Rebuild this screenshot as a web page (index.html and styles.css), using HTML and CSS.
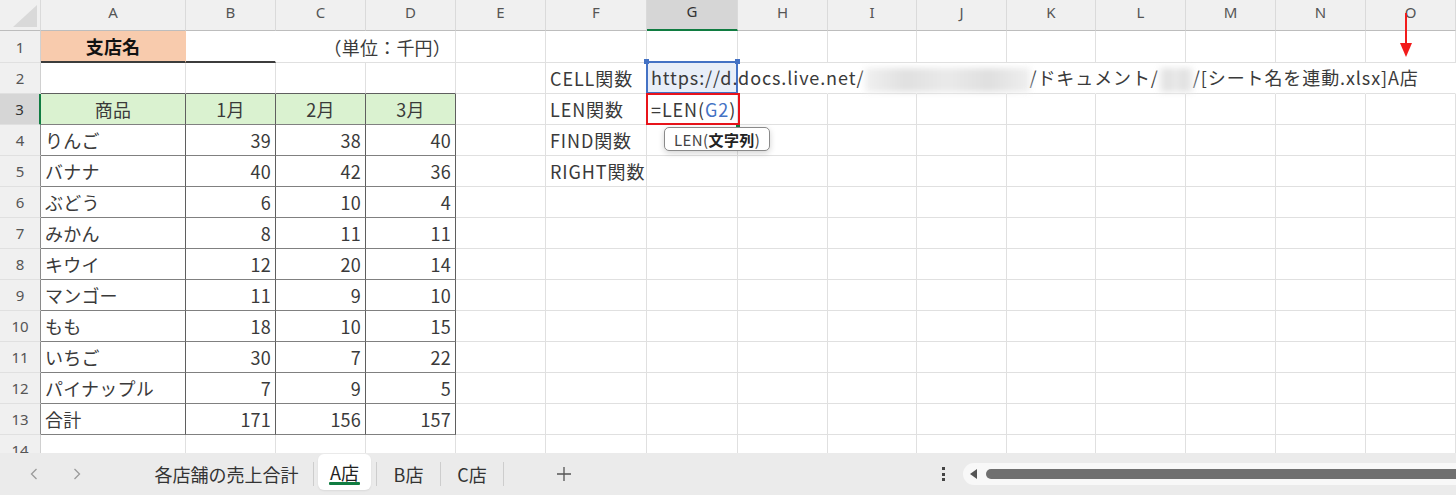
FILE: index.html
```html
<!DOCTYPE html>
<html lang="ja">
<head>
    <meta charset="UTF-8">
    <title>シート名を連動</title>
    <link rel="stylesheet" href="styles.css">
</head>
<body>
<div class="app">
    <div class="sheet">
        <div class="grid">
            <!-- column headers -->
            <div class="corner"><span class="tri"></span></div>
            <div class="h">A</div><div class="h">B</div><div class="h">C</div><div class="h">D</div><div class="h">E</div>
            <div class="h">F</div><div class="h sel">G</div><div class="h">H</div><div class="h">I</div><div class="h">J</div>
            <div class="h">K</div><div class="h">L</div><div class="h">M</div><div class="h">N</div><div class="h">O</div>

            <!-- row 1 -->
            <div class="rh">1</div>
            <div class="c shop">支店名</div>
            <div class="c b1"></div>
            <div class="c unit">（単位：千円）</div>
            <div class="c"></div><div class="c"></div><div class="c"></div><div class="c"></div><div class="c"></div><div class="c"></div>
            <div class="c"></div><div class="c"></div><div class="c"></div><div class="c"></div><div class="c"></div>

            <!-- row 2 -->
            <div class="rh">2</div>
            <div class="c tt"></div><div class="c tt"></div><div class="c tt"></div><div class="c tt"></div>
            <div class="c"></div>
            <div class="c w">CELL関数</div>
            <div class="c ref w"><span class="txt">https://d.docs.live.net/<span class="blur wide"></span>/ドキュメント/<span class="blur narrow"></span>/[シート名を連動.xlsx]A店</span></div>
            <div class="c nr"></div><div class="c nr"></div><div class="c nr"></div><div class="c nr"></div>
            <div class="c nr"></div><div class="c nr"></div><div class="c nr"></div><div class="c nr"></div>

            <!-- row 3 -->
            <div class="rh sel">3</div>
            <div class="c t g ctr">商品</div><div class="c t g ctr">1月</div><div class="c t g ctr">2月</div><div class="c t g ctr">3月</div>
            <div class="c"></div>
            <div class="c w">LEN関数</div>
            <div class="c edit w"><span class="txt">=LEN(<span class="blue">G2</span>)</span>
                <div class="tip">LEN(<b>文字列</b>)</div>
            </div>
            <div class="c"></div><div class="c"></div><div class="c"></div><div class="c"></div>
            <div class="c"></div><div class="c"></div><div class="c"></div><div class="c"></div>

            <!-- row 4 -->
            <div class="rh tb">4</div>
            <div class="c t">りんご</div><div class="c t n">39</div><div class="c t n">38</div><div class="c t n">40</div>
            <div class="c"></div><div class="c w">FIND関数</div>
            <div class="c"></div><div class="c"></div><div class="c"></div><div class="c"></div><div class="c"></div>
            <div class="c"></div><div class="c"></div><div class="c"></div><div class="c"></div>

            <!-- row 5 -->
            <div class="rh tb">5</div>
            <div class="c t">バナナ</div><div class="c t n">40</div><div class="c t n">42</div><div class="c t n">36</div>
            <div class="c"></div><div class="c w">RIGHT関数</div>
            <div class="c"></div><div class="c"></div><div class="c"></div><div class="c"></div><div class="c"></div>
            <div class="c"></div><div class="c"></div><div class="c"></div><div class="c"></div>

            <!-- row 6 -->
            <div class="rh tb">6</div>
            <div class="c t">ぶどう</div><div class="c t n">6</div><div class="c t n">10</div><div class="c t n">4</div>
            <div class="c"></div><div class="c"></div>
            <div class="c"></div><div class="c"></div><div class="c"></div><div class="c"></div><div class="c"></div>
            <div class="c"></div><div class="c"></div><div class="c"></div><div class="c"></div>

            <!-- row 7 -->
            <div class="rh tb">7</div>
            <div class="c t">みかん</div><div class="c t n">8</div><div class="c t n">11</div><div class="c t n">11</div>
            <div class="c"></div><div class="c"></div>
            <div class="c"></div><div class="c"></div><div class="c"></div><div class="c"></div><div class="c"></div>
            <div class="c"></div><div class="c"></div><div class="c"></div><div class="c"></div>

            <!-- row 8 -->
            <div class="rh tb">8</div>
            <div class="c t">キウイ</div><div class="c t n">12</div><div class="c t n">20</div><div class="c t n">14</div>
            <div class="c"></div><div class="c"></div>
            <div class="c"></div><div class="c"></div><div class="c"></div><div class="c"></div><div class="c"></div>
            <div class="c"></div><div class="c"></div><div class="c"></div><div class="c"></div>

            <!-- row 9 -->
            <div class="rh tb">9</div>
            <div class="c t">マンゴー</div><div class="c t n">11</div><div class="c t n">9</div><div class="c t n">10</div>
            <div class="c"></div><div class="c"></div>
            <div class="c"></div><div class="c"></div><div class="c"></div><div class="c"></div><div class="c"></div>
            <div class="c"></div><div class="c"></div><div class="c"></div><div class="c"></div>

            <!-- row 10 -->
            <div class="rh tb">10</div>
            <div class="c t">もも</div><div class="c t n">18</div><div class="c t n">10</div><div class="c t n">15</div>
            <div class="c"></div><div class="c"></div>
            <div class="c"></div><div class="c"></div><div class="c"></div><div class="c"></div><div class="c"></div>
            <div class="c"></div><div class="c"></div><div class="c"></div><div class="c"></div>

            <!-- row 11 -->
            <div class="rh tb">11</div>
            <div class="c t">いちご</div><div class="c t n">30</div><div class="c t n">7</div><div class="c t n">22</div>
            <div class="c"></div><div class="c"></div>
            <div class="c"></div><div class="c"></div><div class="c"></div><div class="c"></div><div class="c"></div>
            <div class="c"></div><div class="c"></div><div class="c"></div><div class="c"></div>

            <!-- row 12 -->
            <div class="rh tb">12</div>
            <div class="c t">パイナップル</div><div class="c t n">7</div><div class="c t n">9</div><div class="c t n">5</div>
            <div class="c"></div><div class="c"></div>
            <div class="c"></div><div class="c"></div><div class="c"></div><div class="c"></div><div class="c"></div>
            <div class="c"></div><div class="c"></div><div class="c"></div><div class="c"></div>

            <!-- row 13 -->
            <div class="rh tb">13</div>
            <div class="c t">合計</div><div class="c t n">171</div><div class="c t n">156</div><div class="c t n">157</div>
            <div class="c"></div><div class="c"></div>
            <div class="c"></div><div class="c"></div><div class="c"></div><div class="c"></div><div class="c"></div>
            <div class="c"></div><div class="c"></div><div class="c"></div><div class="c"></div>

            <!-- row 14 -->
            <div class="rh">14</div>
            <div class="c"></div><div class="c"></div><div class="c"></div><div class="c"></div><div class="c"></div>
            <div class="c"></div><div class="c"></div><div class="c"></div><div class="c"></div><div class="c"></div>
            <div class="c"></div><div class="c"></div><div class="c"></div><div class="c"></div><div class="c"></div>
        </div>

        <svg class="arrow" width="14" height="46" viewBox="0 0 14 46">
            <line x1="7" y1="1" x2="7" y2="33" stroke="#f21b1b" stroke-width="2"/>
            <polygon points="1,31 13,31 7,45" fill="#f21b1b"/>
        </svg>
    </div>

    <div class="tabs">
        <div class="nav">
            <svg class="chev" width="8" height="12" viewBox="0 0 8 12"><path d="M6.5 1 1.5 6l5 5"/></svg>
            <svg class="chev" width="8" height="12" viewBox="0 0 8 12"><path d="M1.5 1l5 5-5 5"/></svg>
        </div>
        <div class="tab first">各店舗の売上合計</div>
        <span class="sep"></span>
        <div class="tab active">A店</div>
        <span class="sep gap"></span>
        <div class="tab b">B店</div>
        <span class="sep"></span>
        <div class="tab c3">C店</div>
        <span class="sep"></span>
        <svg class="add" width="14" height="14" viewBox="0 0 14 14"><path d="M7 0v14M0 7h14"/></svg>
        <div class="hscroll">
            <div class="more"><i></i><i></i><i></i></div>
            <div class="track"><span class="larr"></span><span class="thumb"></span></div>
        </div>
    </div>
</div>
</body>
</html>
```

FILE: styles.css
```css
body {margin: 0; overflow: hidden; background: #fff; font-family: "Noto Sans CJK JP", "Noto Sans", sans-serif; color: #3a3a3a;}
.app {display: flex; flex-direction: column; width: 1456px; height: 495px;}
.sheet {position: relative; height: 453px; overflow: hidden;}

.grid {display: grid; grid-template-columns: 41px 145px 90px 90px 90px 90px 101px 91px 90px 89px 90px 89px 90px 90px 90px 90px; grid-template-rows: 31px 32px repeat(13, 31px);}
.grid > div {box-sizing: border-box; display: flex; align-items: center; white-space: nowrap;}

/* headers */
.corner {position: relative; background: #f0f0f0; border-right: 1px solid #dadada; border-bottom: 1px solid #bdbdbd;}
.tri {position: absolute; right: 3px; bottom: 3px; width: 0; height: 0; border-left: 24px solid transparent; border-bottom: 22px solid #d9d9d9;}
.h {background: #f0f0f0; border-right: 1px solid #dadada; border-bottom: 1px solid #bdbdbd; justify-content: center; padding-bottom: 7px; font: 15px "Noto Sans", sans-serif; color: #555;}
.h.sel {background: #d6d6d6; border-bottom: 2px solid #107c41; color: #333;}
.rh {background: #f0f0f0; border-right: 1px solid #d0d0d0; border-bottom: 1px solid #e0e0e0; justify-content: center; font: 15px "Noto Sans", sans-serif; color: #555;}
.rh.sel {background: #d6d6d6; border-right: 2px solid #107c41; color: #333;}
.rh.tb {border-right-color: #8a8a8a;}

/* cells */
.c {border-right: 1px solid #e0e0e0; border-bottom: 1px solid #e0e0e0; padding: 0 4px; font-size: 18px; letter-spacing: 0.2px;}
.c.w {letter-spacing: 0.9px;}
.c.nr {border-right-color: transparent;}
.c.n {justify-content: flex-end;}
.c.ctr {justify-content: center;}
.c.t {border-right-color: #5f5f5f; border-bottom-color: #808080;}
.c.tt {border-bottom-color: #5f5f5f;}
.c.g {background: #daf2d0;}

.shop {background: #f8cbad; border-right-color: #f8cbad; border-bottom: 2px solid #3c3c3c; justify-content: center; font-weight: bold; color: #111;}
.b1 {border-right-color: transparent; border-bottom: 2px solid #3c3c3c;}
.unit {grid-column: span 2; justify-content: flex-end;}

.ref {position: relative; background: #e8eef8;}
.ref::before {content: ""; position: absolute; top: -2px; left: -1px; right: -1px; bottom: -1px; border: 2px solid #4472c4;}
.ref::after {content: ""; position: absolute; top: -4px; left: -3px; width: 5px; height: 5px; background: #4472c4; box-shadow: 91px 0 0 #4472c4;}
.ref .txt {position: relative; z-index: 1;}
.blur {display: inline-block; height: 24px; vertical-align: middle; background: linear-gradient(90deg, #f0f0f0, #e0e0e0 25%, #eaeaea 50%, #dfdfdf 75%, #efefef); filter: blur(3px);}
.blur.wide {width: 165px;}
.blur.narrow {width: 34px;}

.edit {position: relative;}
.edit::before {content: ""; position: absolute; top: -1px; left: -1px; right: -3px; bottom: -1px; border: 2px solid #e8141b;}
.edit::after {content: ""; position: absolute; right: -3px; bottom: -5px; width: 4px; height: 4px; background: #107c41;}
.blue {color: #4472c4;}
.tip {position: absolute; left: 17px; top: 33px; z-index: 2; height: 22px; padding: 0 9px; display: flex; align-items: center; background: #fff; border: 1px solid #8a8a8a; border-radius: 5px; box-shadow: 0 2px 6px rgba(0,0,0,.18); font-size: 15px; letter-spacing: 0.4px; color: #444;}
.tip b {color: #222;}

.arrow {position: absolute; left: 1399px; top: 12px;}

/* sheet tabs */
.tabs {height: 42px; background: #ebebeb; display: flex; align-items: center; font-size: 18px; color: #333;}
.nav {width: 140px; box-sizing: border-box; padding-left: 30px; display: flex; gap: 35px;}
.chev {fill: none; stroke: #9a9a9a; stroke-width: 1.3;}
.tab {display: flex; justify-content: center; align-items: center; height: 36px;}
.tab.first {width: 173px;}
.tab.active {position: relative; width: 53px; margin-left: 4px; align-self: flex-start; margin-top: 1px; background: #fff; border-radius: 6px; box-shadow: 0 1px 2px rgba(0,0,0,.08); color: #222;}
.tab.active::after {content: ""; position: absolute; left: 11px; right: 11px; bottom: 5px; height: 3px; background: #107c41; border-radius: 1px;}
.tab.b {width: 63px;}
.tab.c3 {width: 62px;}
.sep {width: 1px; height: 24px; background: #cdcdcd;}
.sep.gap {margin-left: 5px;}
.add {margin-left: 53px; fill: none; stroke: #555; stroke-width: 1.3;}

.hscroll {margin-left: auto; width: 520px; display: flex; align-items: center;}
.more {width: 14px; display: flex; flex-direction: column; align-items: center; gap: 2.5px;}
.more i {display: block; width: 3px; height: 3px; background: #444;}
.track {flex: 1; margin-left: 13px; height: 22px; box-sizing: border-box; padding-left: 7px; display: flex; align-items: center; background: #f8f8f8; border-radius: 11px 0 0 11px;}
.larr {width: 0; height: 0; border-top: 5px solid transparent; border-bottom: 5px solid transparent; border-right: 7px solid #555;}
.thumb {flex: 1; margin-left: 9px; height: 10px; background: #707070; border-radius: 5px 0 0 5px;}
```
